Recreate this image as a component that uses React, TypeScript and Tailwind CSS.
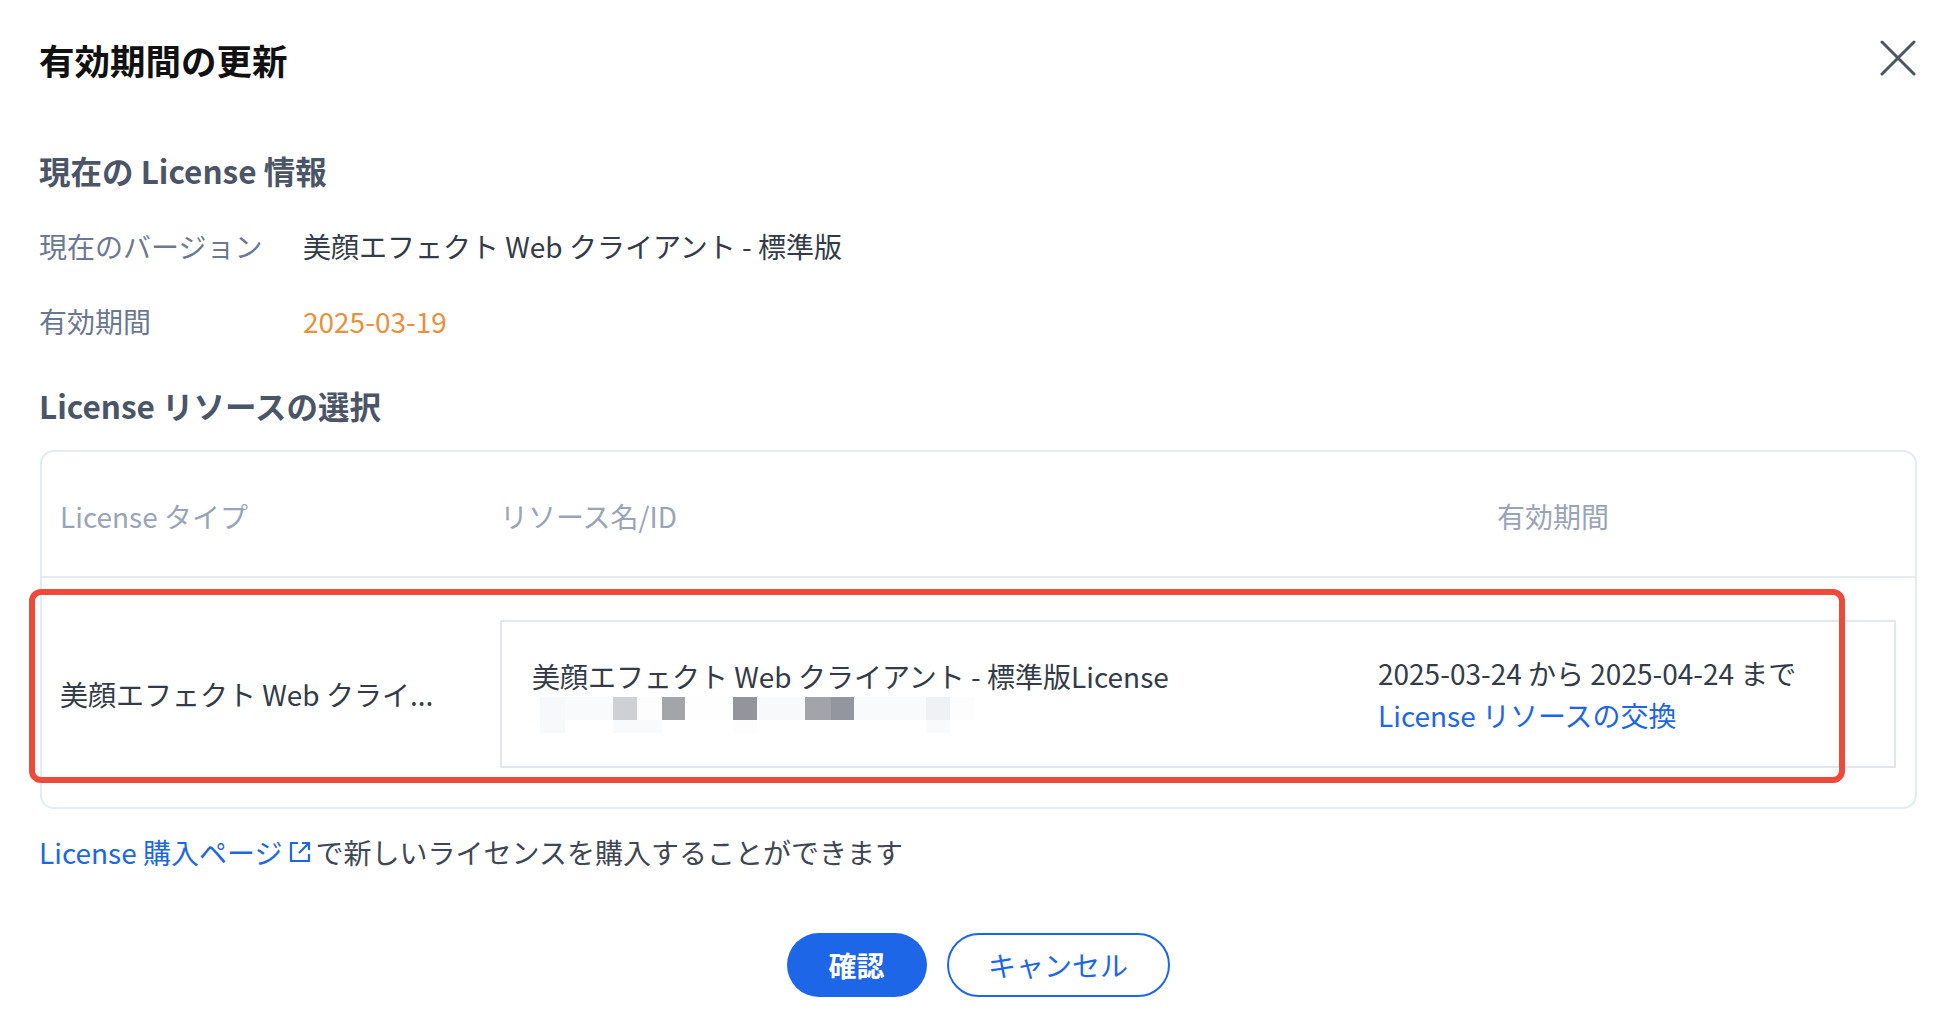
import React from "react";

const FONT = { fontFamily: '"Noto Sans CJK JP", "Noto Sans", sans-serif' };

function BlurredId() {
  const row1: [number, number, string][] = [
    [0, 25, "#f7f8fc"],
    [25, 73, "#f9fafb"],
    [73, 97, "#cfd0d3"],
    [97, 122, "#fdfdfe"],
    [122, 145, "#a4a5ab"],
    [145, 193, "#fefefe"],
    [193, 217, "#94959c"],
    [217, 265, "#f8f9fb"],
    [265, 291, "#a3a3ab"],
    [291, 314, "#93969e"],
    [314, 386, "#f9fafb"],
    [386, 410, "#f0f1f4"],
    [410, 434, "#fdfdfe"],
  ];
  const row2: [number, number, string][] = [
    [0, 25, "#f8f9fa"],
    [73, 122, "#f9fafb"],
    [193, 217, "#fdfdfd"],
    [386, 410, "#f9fafc"],
  ];
  return (
    <svg width="434" height="36" viewBox="0 0 434 36" className="block ml-[8px]">
      {row1.map(([a, b, c], i) => (
        <rect key={"a" + i} x={a} y={0} width={b - a} height={23} fill={c} />
      ))}
      {row2.map(([a, b, c], i) => (
        <rect key={"b" + i} x={a} y={23} width={b - a} height={13} fill={c} />
      ))}
    </svg>
  );
}

export default function App() {
  return (
    <div className="min-h-screen bg-white pl-[39px] pr-[20px] pb-[38px]" style={FONT}>
      {/* Title row */}
      <div className="flex items-start justify-between pt-[36px]">
        <h1 className="text-[35.5px] leading-[48px] font-bold text-[#111111]">有効期間の更新</h1>
        <svg width="36" height="36" viewBox="0 0 36 36" className="mt-[4px] mr-[1px]">
          <path d="M2 2 L34 34 M34 2 L2 34" stroke="#4b5563" strokeWidth="3" strokeLinecap="round" />
        </svg>
      </div>

      {/* Current license info */}
      <h2 className="mt-[64px] text-[31.5px] leading-[44px] font-bold text-[#4b5568]">現在の License 情報</h2>
      <div className="mt-[33px] flex text-[28px] leading-[42px]">
        <div className="w-[264px] text-[#6c7891]">現在のバージョン</div>
        <div className="text-[#333b48]">美顔エフェクト Web クライアント - 標準版</div>
      </div>
      <div className="mt-[33px] flex text-[28px] leading-[42px]">
        <div className="w-[264px] text-[#6c7891]">有効期間</div>
        <div className="text-[#e8903c]">2025-03-19</div>
      </div>

      {/* Resource selection */}
      <h2 className="mt-[41px] text-[31.5px] leading-[44px] font-bold text-[#4b5568]">License リソースの選択</h2>
      <div className="relative mt-[23px] ml-[1px] rounded-[14px] border-2 border-[#e6eaf2]">
        <div className="flex border-b-2 border-[#e6eaf2] pt-[43px] pb-[39px] text-[28px] leading-[42px] text-[#9aa4b9]">
          <div className="w-[458px] pl-[18px]">License タイプ</div>
          <div className="w-[997px]">リソース名/ID</div>
          <div className="flex-1">有効期間</div>
        </div>
        <div className="flex pt-[42px] pb-[39px] text-[28px] leading-[42px]">
          <div className="flex w-[458px] items-center pl-[18px] pr-[20px]">
            <div className="whitespace-nowrap text-[#333b48]">美顔エフェクト Web クライ...</div>
          </div>
          <div className="mr-[19px] flex h-[148px] flex-1 items-center border-2 border-[#e3e6eb] bg-white">
            <div className="w-[876px] pl-[30px]">
              <div className="text-[#333b48]">美顔エフェクト Web クライアント - 標準版License</div>
              <BlurredId />
            </div>
            <div className="flex-1">
              <div className="text-[#333b48]">2025-03-24 から 2025-04-24 まで</div>
              <div className="text-[#1d66e5]">License リソースの交換</div>
            </div>
          </div>
        </div>
        {/* annotation overlay */}
        <div className="pointer-events-none absolute left-[-13px] top-[137px] h-[194px] w-[1816px] rounded-[12px] border-[6px] border-[#ee4a3c]" />
      </div>

      {/* Footer note */}
      <div className="mt-[22px] flex items-center text-[28px] leading-[42px]">
        <span className="text-[#1d66e5]">License 購入ページ</span>
        <svg width="22" height="22" viewBox="0 0 22 22" className="ml-[7px] mr-[4px]">
          <path d="M9 2 H2 V20 H20 V13" fill="none" stroke="#1d66e5" strokeWidth="2.2" />
          <path d="M13 2 H20 V9 M20 2 L10 12" fill="none" stroke="#1d66e5" strokeWidth="2.2" />
        </svg>
        <span className="text-[#3f4654]">で新しいライセンスを購入することができます</span>
      </div>

      {/* Buttons */}
      <div className="mt-[60px] flex justify-center gap-[20px]">
        <button className="h-[64px] w-[140px] rounded-full bg-[#1e66e8] text-[28px] font-bold text-white">確認</button>
        <button className="h-[64px] w-[223px] rounded-full border-2 border-[#1e66e8] bg-white text-[28px] text-[#1e66e8]">キャンセル</button>
      </div>
    </div>
  );
}
